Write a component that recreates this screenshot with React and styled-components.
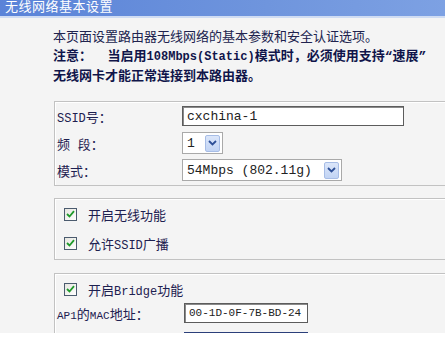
import React from "react";
import styled, { createGlobalStyle } from "styled-components";

const GlobalStyle = createGlobalStyle`
  html, body {
    margin: 0;
    padding: 0;
    background: #ffffff;
  }
  body {
    font-family: "Liberation Mono", "Noto Sans CJK SC", monospace;
    font-size: 13px;
    color: #1d2050;
  }
`;

const Page = styled.div`
  width: 445px;
  height: 333px;
  overflow: hidden;
  background: #f4f4f4;
`;

const TitleBar = styled.div`
  height: 16px;
  overflow: hidden;
  background: linear-gradient(90deg, #5a83d8 0%, #6f95dd 60%, #7da1e3 100%);
  border-bottom: 2px solid #cfdcf3;
`;

const Title = styled.div`
  padding-left: 5px;
  line-height: 11px;
  font-size: 13px;
  color: #ffffff;
  font-family: "Noto Sans CJK SC", sans-serif;
  letter-spacing: 0.5px;
`;

const Content = styled.div`
  padding: 10px 0 0 54px;
  display: flex;
  flex-direction: column;
`;

const Intro = styled.div`
  display: flex;
  flex-direction: column;
  margin-left: -1px;
`;

const IntroLine = styled.div`
  line-height: 19px;
  white-space: nowrap;
  font-weight: ${(p) => (p.$bold ? 700 : 400)};
  color: ${(p) => (p.$bold ? "#10154a" : "#20234e")};
`;

const Latin = styled.span`
  font-size: ${(p) => p.$size || 11}px;
`;

const Panel = styled.div`
  margin-top: ${(p) => p.$gap}px;
  margin-right: -10px;
  border: 1px solid #c2c2c2;
  box-shadow: inset 1px 1px 0 #ffffff;
  padding: ${(p) => p.$pad};
  display: flex;
  flex-direction: column;
  gap: ${(p) => p.$rowGap}px;
`;

const FieldRow = styled.div`
  display: grid;
  grid-template-columns: ${(p) => p.$labelWidth}px auto;
  align-items: center;
  height: 22px;
`;

const Label = styled.span`
  padding-left: 2px;
  white-space: nowrap;
`;

const TextBox = styled.div`
  width: ${(p) => p.$width}px;
  height: ${(p) => p.$height || 20}px;
  box-sizing: border-box;
  border: 1px solid #5c5c5c;
  box-shadow: inset 1px 1px 0 #8a8a8a;
  background: #ffffff;
  display: flex;
  align-items: center;
  padding-left: 4px;
  font-size: ${(p) => p.$size || 13}px;
  color: #222;
`;

const SelectBox = styled.div`
  width: ${(p) => p.$width}px;
  height: 22px;
  box-sizing: border-box;
  border: 1px solid #a9a9a9;
  background: #ffffff;
  display: flex;
  align-items: center;
  justify-content: space-between;
  padding: 0 2px 0 4px;
  color: #222;
`;

const Arrow = styled.span`
  width: 15px;
  height: 17px;
  box-sizing: border-box;
  border: 1px solid #a7bde6;
  border-radius: 2px;
  background: linear-gradient(180deg, #dbe6fa 0%, #c2d4f4 100%);
  display: flex;
  align-items: center;
  justify-content: center;
`;

const CheckRow = styled.label`
  display: flex;
  align-items: center;
  gap: 11px;
  height: 22px;
  padding-left: 9px;
  white-space: nowrap;
`;

const Box = styled.span`
  width: 13px;
  height: 13px;
  box-sizing: border-box;
  border: 1px solid #4b5b6e;
  background: linear-gradient(135deg, #e6e6e0 0%, #ffffff 100%);
  display: flex;
  align-items: center;
  justify-content: center;
`;

const NextInput = styled.div`
  margin-left: 129px;
  margin-top: 6px;
  width: 124px;
  height: 6px;
  border-top: 1px solid #2b3f7a;
  background: #ffffff;
`;

function Chevron() {
  return (
    <svg width="9" height="6" viewBox="0 0 9 6">
      <path d="M1 1 L4.5 4.5 L8 1" fill="none" stroke="#2d4f97" strokeWidth="1.8" />
    </svg>
  );
}

function Check() {
  return (
    <svg width="9" height="8" viewBox="0 0 9 8">
      <path d="M1 4 L3.5 6.5 L8 1.2" fill="none" stroke="#1f9a2a" strokeWidth="1.8" />
    </svg>
  );
}

function CheckItem({ children }) {
  return (
    <CheckRow>
      <Box>
        <Check />
      </Box>
      <span>{children}</span>
    </CheckRow>
  );
}

export default function App() {
  return (
    <>
      <GlobalStyle />
      <Page>
        <TitleBar>
          <Title>无线网络基本设置</Title>
        </TitleBar>
        <Content>
          <Intro>
            <IntroLine>本页面设置路由器无线网络的基本参数和安全认证选项。</IntroLine>
            <IntroLine $bold>
              注意：&nbsp; 当启用<Latin $size={12}>108Mbps(Static)</Latin>模式时，必须使用支持“速展”
            </IntroLine>
            <IntroLine $bold>无线网卡才能正常连接到本路由器。</IntroLine>
          </Intro>

          <Panel $gap={15} $pad="3px 0 4px 0" $rowGap={5}>
            <FieldRow $labelWidth={127}>
              <Label>
                <Latin $size={12}>SSID</Latin>号：
              </Label>
              <TextBox $width={222}>cxchina-1</TextBox>
            </FieldRow>
            <FieldRow $labelWidth={127}>
              <Label>频 段：</Label>
              <SelectBox $width={41}>
                1
                <Arrow>
                  <Chevron />
                </Arrow>
              </SelectBox>
            </FieldRow>
            <FieldRow $labelWidth={127}>
              <Label>模式：</Label>
              <SelectBox $width={160}>
                54Mbps (802.11g)
                <Arrow>
                  <Chevron />
                </Arrow>
              </SelectBox>
            </FieldRow>
          </Panel>

          <Panel $gap={12} $pad="4px 0 5px 0" $rowGap={7}>
            <CheckItem>开启无线功能</CheckItem>
            <CheckItem>
              允许<Latin $size={12}>SSID</Latin>广播
            </CheckItem>
          </Panel>

          <Panel $gap={13} $pad="4px 0 0 0" $rowGap={2}>
            <CheckItem>
              开启<Latin $size={12}>Bridge</Latin>功能
            </CheckItem>
            <FieldRow $labelWidth={129}>
              <Label>
                <Latin>AP1</Latin>的<Latin>MAC</Latin>地址：
              </Label>
              <TextBox $width={124} $height={20} $size={11}>
                00-1D-0F-7B-BD-24
              </TextBox>
            </FieldRow>
            <NextInput />
          </Panel>
        </Content>
      </Page>
    </>
  );
}
